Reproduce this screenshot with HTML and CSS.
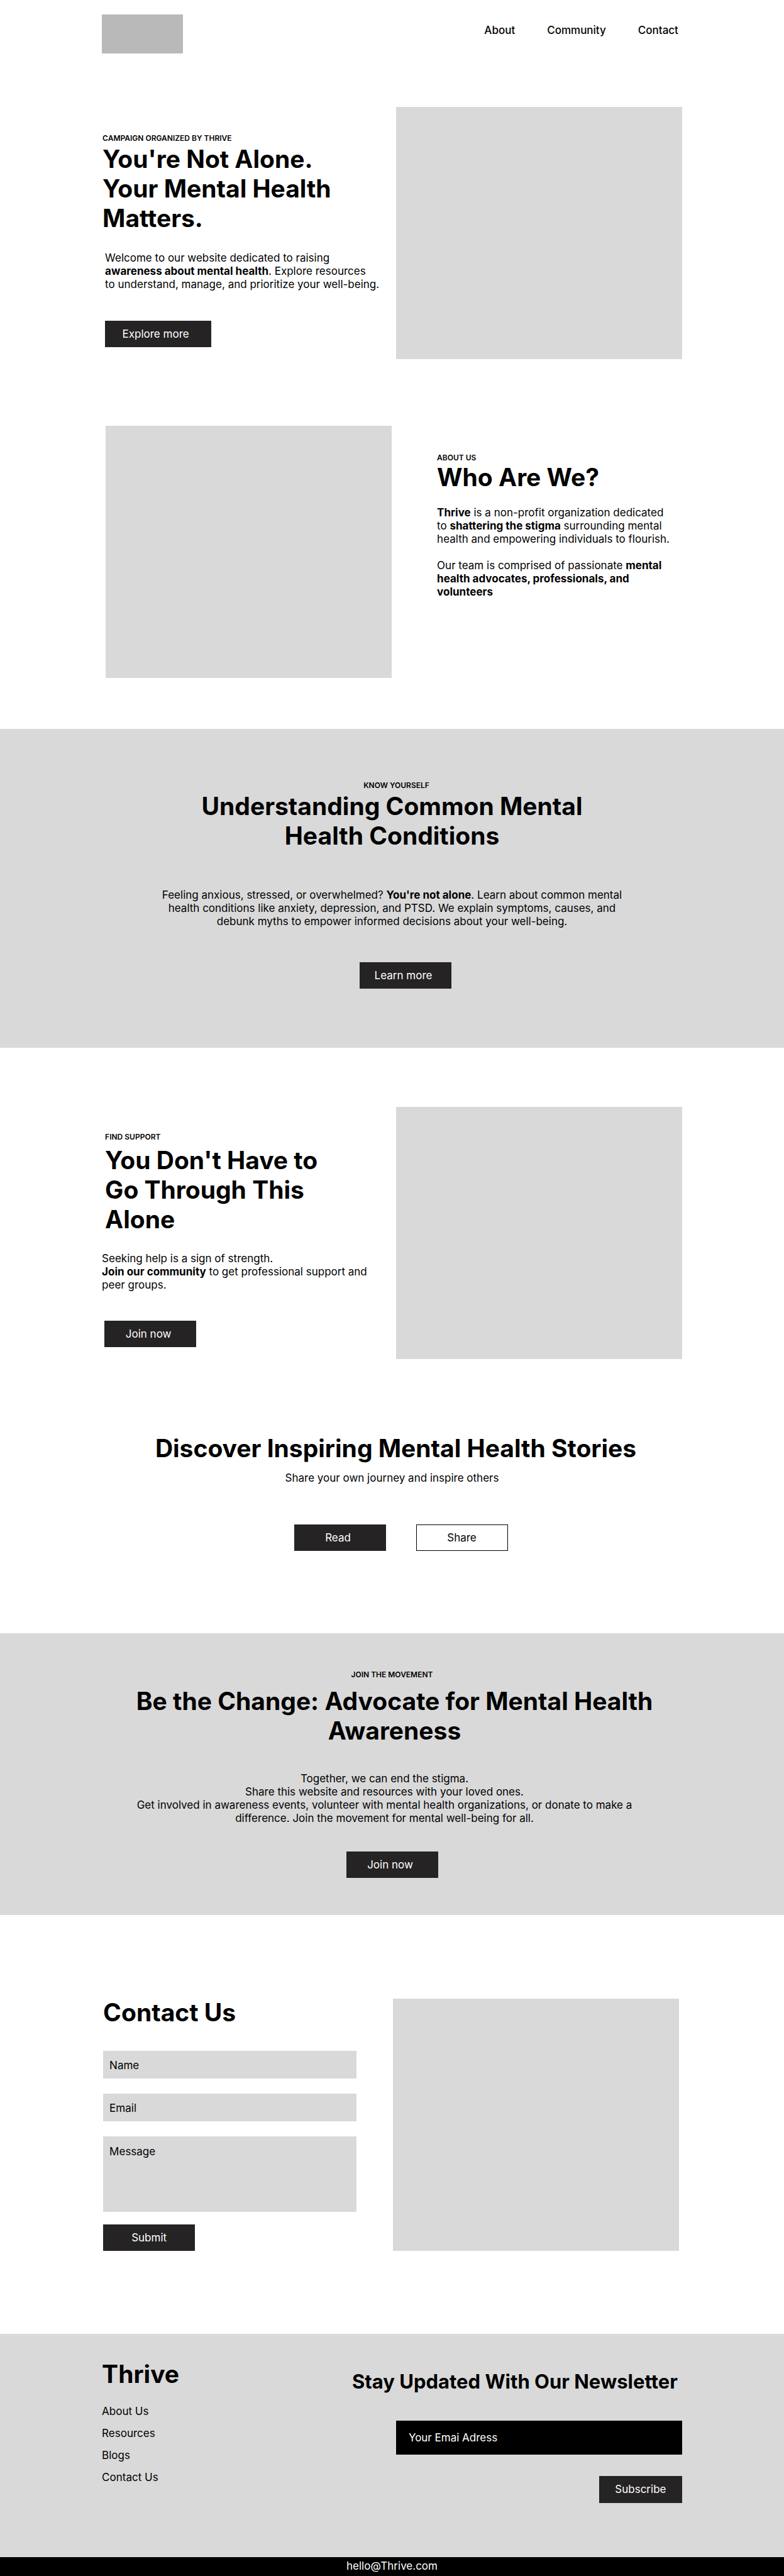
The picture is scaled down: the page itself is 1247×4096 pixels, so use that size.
FILE: index.html
```html
<!DOCTYPE html>
<html lang="en">
<head>
<meta charset="utf-8">
<meta name="viewport" content="width=device-width, initial-scale=1">
<title>Thrive</title>
<link rel="stylesheet" href="styles.css">
</head>
<body>
<header class="site-header wrap">
  <div class="logo" role="img" aria-label="Thrive logo"></div>
  <nav class="nav">
    <a href="#about">About</a>
    <a href="#support">Community</a>
    <a href="#contact">Contact</a>
  </nav>
</header>

<main>
  <section class="hero wrap">
    <div class="hero-copy">
      <p class="eyebrow">CAMPAIGN ORGANIZED BY THRIVE</p>
      <h1 class="title">You're Not Alone.<br>Your Mental Health<br>Matters.</h1>
      <div class="hero-body">
        <p class="text">Welcome to our website dedicated to raising<br><strong>awareness about mental health</strong>. Explore resources<br>to understand, manage, and prioritize your well-being.</p>
        <button class="btn btn-wide" type="button">Explore more</button>
      </div>
    </div>
    <div class="picture"></div>
  </section>

  <section class="about wrap" id="about">
    <div class="picture"></div>
    <div class="about-copy">
      <p class="eyebrow">ABOUT US</p>
      <h2 class="title">Who Are We?</h2>
      <p class="text"><strong>Thrive</strong> is a non-profit organization dedicated to <strong>shattering the stigma</strong> surrounding mental health and empowering individuals to flourish.</p>
      <p class="text">Our team is comprised of passionate <strong>mental health advocates, professionals, and volunteers</strong></p>
    </div>
  </section>

  <section class="band know">
    <p class="eyebrow">KNOW YOURSELF</p>
    <h2 class="title">Understanding Common Mental Health Conditions</h2>
    <p class="text">Feeling anxious, stressed, or overwhelmed? <strong>You're not alone</strong>. Learn about common mental health conditions like anxiety, depression, and PTSD. We explain symptoms, causes, and debunk myths to empower informed decisions about your well-being.</p>
    <div class="know-action"><button class="btn btn-lead" type="button">Learn more</button></div>
  </section>

  <section class="support wrap" id="support">
    <div class="support-copy">
      <div class="support-head">
        <p class="eyebrow">FIND SUPPORT</p>
        <h2 class="title">You Don't Have to<br>Go Through This<br>Alone</h2>
      </div>
      <p class="text">Seeking help is a sign of strength.<br><strong>Join our community</strong> to get professional support and peer groups.</p>
      <div class="support-action"><button class="btn btn-lead" type="button">Join now</button></div>
    </div>
    <div class="picture"></div>
  </section>

  <section class="stories">
    <h2 class="title">Discover Inspiring Mental Health Stories</h2>
    <p class="text">Share your own journey and inspire others</p>
    <div class="stories-actions">
      <button class="btn btn-lead" type="button">Read</button>
      <button class="btn btn-outline" type="button">Share</button>
    </div>
  </section>

  <section class="band movement">
    <p class="eyebrow">JOIN THE MOVEMENT</p>
    <h2 class="title">Be the Change: Advocate for Mental Health Awareness</h2>
    <p class="text">Together, we can end the stigma.<br>Share this website and resources with your loved ones.<br>Get involved in awareness events, volunteer with mental health organizations, or donate to make a difference. Join the movement for mental well-being for all.</p>
    <button class="btn btn-lead" type="button">Join now</button>
  </section>

  <section class="contact wrap" id="contact">
    <form class="contact-form">
      <h2 class="title">Contact Us</h2>
      <input class="field" type="text" name="name" placeholder="Name" aria-label="Name">
      <input class="field" type="email" name="email" placeholder="Email" aria-label="Email">
      <textarea class="field field-message" name="message" placeholder="Message" aria-label="Message"></textarea>
      <button class="btn" type="button">Submit</button>
    </form>
    <div class="picture"></div>
  </section>
</main>

<footer>
  <div class="footer-main wrap">
    <div class="footer-brand">
      <h2 class="title">Thrive</h2>
      <ul class="footer-links">
        <li><a href="#about">About Us</a></li>
        <li><a href="#resources">Resources</a></li>
        <li><a href="#blogs">Blogs</a></li>
        <li><a href="#contact">Contact Us</a></li>
      </ul>
    </div>
    <form class="newsletter">
      <h3 class="subtitle">Stay Updated With Our Newsletter</h3>
      <input class="newsletter-field" type="email" name="newsletter" placeholder="Your Emai Adress" aria-label="Your email address">
      <button class="btn btn-subscribe" type="button">Subscribe</button>
    </form>
  </div>
  <div class="footer-bar"><a href="mailto:hello@Thrive.com">hello@Thrive.com</a></div>
</footer>
</body>
</html>
```
FILE: styles.css
```css
*,
*::before,
*::after {
  box-sizing: border-box;
}

body {
  margin: 0;
  background: #fff;
  color: #000;
  font-family: Inter, "Liberation Sans", sans-serif;
  font-size: 17px;
  line-height: 21px;
}

h1, h2, h3, p, ul {
  margin: 0;
  padding: 0;
}

a {
  color: inherit;
  text-decoration: none;
}

strong {
  font-weight: 700;
}

.wrap {
  padding-left: 13%;
  padding-right: 13%;
}

.title {
  font-size: 39px;
  line-height: 47px;
  font-weight: 700;
}

.subtitle {
  font-size: 31px;
  line-height: 38px;
  font-weight: 700;
}

.eyebrow {
  font-size: 12px;
  line-height: 15px;
  font-weight: 600;
}

.picture {
  height: 401px;
  background: #d9d9d9;
}

/* Buttons */
.btn {
  width: 146px;
  height: 42px;
  padding: 0;
  border: 0;
  background: #252324;
  color: #fff;
  font: inherit;
  cursor: pointer;
}

.btn-wide {
  width: 169px;
  padding-right: 8px;
}

.btn-lead {
  padding-right: 6px;
}

.btn-outline {
  border: 1px solid #000;
  background: #fff;
  color: #000;
}

/* Header */
.site-header {
  display: flex;
  justify-content: space-between;
  align-items: flex-start;
  padding-top: 23px;
}

.logo {
  width: 129px;
  height: 62px;
  background: #b9b9b9;
}

.nav {
  display: flex;
  gap: 51px;
  padding: 15px 6px 0 0;
  font-weight: 500;
}

/* Hero */
.hero {
  display: grid;
  grid-template-columns: 1fr 455px;
  padding-top: 85px;
}

.hero-copy {
  padding: 42px 0 0 1px;
}

.hero .title {
  margin-top: 2px;
}

.hero-body {
  margin-top: 30px;
  padding-left: 4px;
}

.hero .btn {
  margin-top: 47px;
}

/* About */
.about {
  display: grid;
  grid-template-columns: 455px 1fr;
  gap: 72px;
  padding-top: 106px;
  padding-bottom: 81px;
}

.about .picture {
  margin-left: 6px;
  margin-right: -6px;
}

.about-copy {
  max-width: 381px;
  padding: 43px 0 0 6px;
}

.about .title + .text {
  margin-top: 23px;
}

.about .text + .text {
  margin-top: 21px;
}

/* Full-width grey bands */
.band {
  display: flex;
  flex-direction: column;
  align-items: center;
  background: #d9d9d9;
  text-align: center;
}

.know {
  padding-top: 82px;
  padding-bottom: 94px;
}

.know .eyebrow {
  padding-left: 14px;
}

.know .title {
  max-width: 640px;
  margin-top: 2px;
}

.know .text {
  max-width: 756px;
  margin-top: 61px;
}

.know-action {
  margin-top: 54px;
  padding-left: 42px;
}

/* Support */
.support {
  display: grid;
  grid-template-columns: 1fr 455px;
  padding-top: 94px;
}

.support-copy {
  padding-top: 40px;
}

.support-head {
  padding-left: 5px;
}

.support .title {
  margin-top: 6px;
}

.support .text {
  max-width: 440px;
  margin-top: 29px;
}

.support-action {
  margin-top: 46px;
  padding-left: 4px;
}

/* Stories */
.stories {
  display: flex;
  flex-direction: column;
  align-items: center;
  padding: 118px 0 131px;
  text-align: center;
}

.stories .title {
  padding-left: 12px;
}

.stories .text {
  margin-top: 14px;
}

.stories-actions {
  display: flex;
  gap: 48px;
  margin-top: 63px;
  padding-left: 28px;
}

/* Movement */
.movement {
  padding-top: 58px;
  padding-bottom: 59px;
}

.movement .title {
  max-width: 860px;
  margin-top: 11px;
  padding-left: 8px;
}

.movement .text {
  max-width: 850px;
  margin-top: 43px;
  padding-right: 24px;
}

.movement .btn {
  margin-top: 42px;
}

/* Contact */
.contact {
  display: grid;
  grid-template-columns: 405px 455px;
  justify-content: space-between;
  align-items: end;
  padding-top: 131px;
  padding-bottom: 132px;
}

.contact .picture {
  margin-left: -5px;
  margin-right: 5px;
}

.contact-form {
  display: flex;
  flex-direction: column;
  align-items: flex-start;
  padding-left: 2px;
}

.field {
  width: 100%;
  height: 44px;
  margin: 0 0 24px;
  padding: 2px 10px 0;
  border: 0;
  border-radius: 0;
  background: #d9d9d9;
  color: #000;
  font: inherit;
}

.field::placeholder {
  color: #000;
  opacity: 1;
}

.contact .title {
  margin-bottom: 38px;
}

.field-message {
  height: 120px;
  margin-bottom: 20px;
  padding: 14px 10px;
  resize: none;
}

/* Footer */
.footer-main {
  display: flex;
  justify-content: space-between;
  padding-top: 40px;
  padding-bottom: 86px;
  background: #d9d9d9;
}

.footer-links {
  display: flex;
  flex-direction: column;
  gap: 14px;
  margin-top: 26px;
  list-style: none;
}

.newsletter {
  display: flex;
  flex-direction: column;
  align-items: flex-end;
  padding-top: 17px;
}

.newsletter .subtitle {
  padding-right: 7px;
}

.newsletter-field {
  width: 455px;
  height: 54px;
  margin: 43px 0 34px;
  padding: 0 20px;
  border: 0;
  border-radius: 0;
  background: #000;
  color: #fff;
  font: inherit;
}

.newsletter-field::placeholder {
  color: #fff;
  opacity: 1;
}

.btn-subscribe {
  width: 132px;
  height: 43px;
}

.footer-bar {
  padding: 4px 0 5px;
  background: #000;
  color: #fff;
  text-align: center;
}
```
